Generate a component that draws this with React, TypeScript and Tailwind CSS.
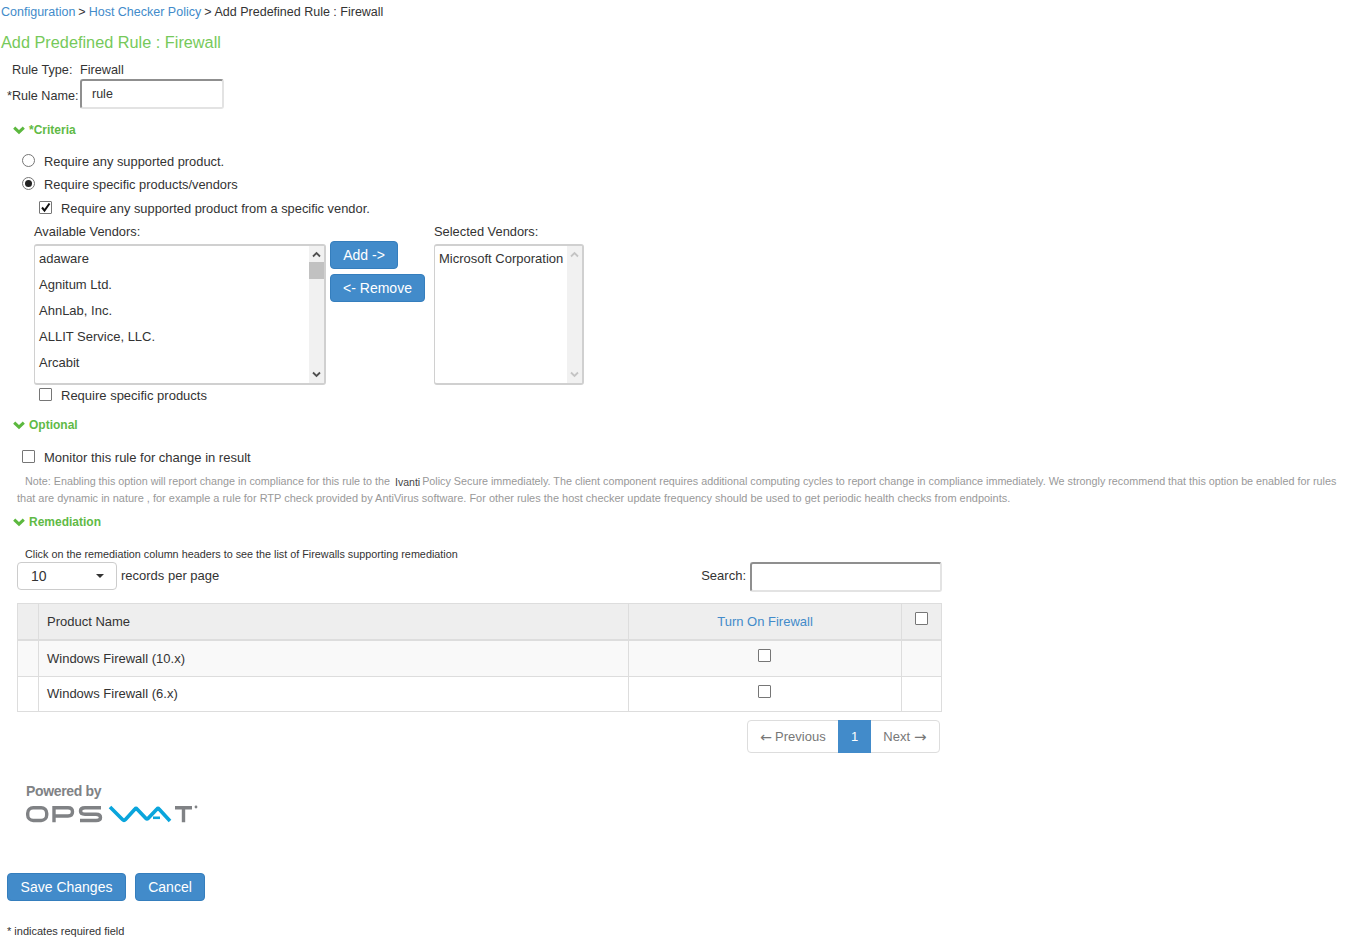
import { ReactNode } from 'react';

const vendors = ['adaware', 'Agnitum Ltd.', 'AhnLab, Inc.', 'ALLIT Service, LLC.', 'Arcabit'];

function Chevron() {
  return (
    <svg width="12" height="9" viewBox="0 0 12 9" className="shrink-0">
      <path d="M1.2 1.6 L6 6.2 L10.8 1.6" fill="none" stroke="#5cb83f" strokeWidth="3" />
    </svg>
  );
}

function SectionTitle({ children, className }: { children: ReactNode; className: string }) {
  return (
    <div className={`flex items-center gap-[4px] pl-[13px] h-[16px] text-[12px] font-bold text-[#5fba46] ${className}`}>
      <Chevron />
      <span>{children}</span>
    </div>
  );
}

function CheckBox({ checked }: { checked?: boolean }) {
  return (
    <span className="relative block w-[13px] h-[13px] border border-[#767676] bg-white rounded-[1px] shrink-0">
      {checked && (
        <svg width="11" height="11" viewBox="0 0 11 11" className="absolute left-0 top-0">
          <path d="M2 5.5 L4.5 8.5 L9.5 1.5" fill="none" stroke="#111" strokeWidth="2" />
        </svg>
      )}
    </span>
  );
}

function Radio({ checked }: { checked?: boolean }) {
  return (
    <span className="flex items-center justify-center w-[13px] h-[13px] border border-[#767676] bg-white rounded-full shrink-0">
      {checked && <span className="block w-[7px] h-[7px] rounded-full bg-[#222]" />}
    </span>
  );
}

function Arrow({ up, color }: { up?: boolean; color: string }) {
  return (
    <svg width="9" height="7" viewBox="0 0 9 7">
      <path d={up ? 'M1 5.5 L4.5 2 L8 5.5' : 'M1 1.5 L4.5 5 L8 1.5'} fill="none" stroke={color} strokeWidth="1.8" />
    </svg>
  );
}

function Btn({ children, className }: { children: ReactNode; className: string }) {
  return (
    <button className={`flex items-center justify-center h-[28px] rounded-[4px] bg-[#428bca] border border-[#357ebd] text-white text-[14px] ${className}`}>
      {children}
    </button>
  );
}

function OpswatLogo() {
  return (
    <svg width="174" height="20" viewBox="0 0 174 20" className="block">
      <g fill="none" stroke="#808285" strokeWidth="3.4">
        <rect x="2.7" y="3.7" width="19" height="12.8" rx="5.5" />
        <path d="M29 18.2 V3.7 H43 Q47.5 3.7 47.5 7.8 Q47.5 12 43 12 H29" />
        <path d="M76 3.7 H60 Q55.5 3.7 55.5 7 Q55.5 10.2 60 10.2 H71 Q75.5 10.2 75.5 13.4 Q75.5 16.5 71 16.5 H55" />
        <path d="M150 3.7 H167 M158.5 3.7 V18.2" />
      </g>
      <path d="M85 3 L97.5 15.5 Q99 17 100.5 15.5 L110 5 Q111 3.8 112 5 L121 14.5 Q122 15.6 123 14.5 L132 5 Q133 3.8 134 5 L145 17" fill="none" stroke="#0aa5dc" strokeWidth="3.6" />
      <rect x="128" y="12.5" width="7" height="2.6" fill="#0aa5dc" />
      <circle cx="171" cy="3" r="1.4" fill="#808285" />
    </svg>
  );
}

function Row({ name, odd }: { name: string; odd?: boolean }) {
  return (
    <div className={`flex border-b border-[#dddddd] text-[13px] text-[#333] ${odd ? 'h-[36px] bg-[#f9f9f9]' : 'h-[35px] bg-white'}`}>
      <div className="w-[21px] border-r border-[#dddddd]" />
      <div className="w-[590px] border-r border-[#dddddd] pl-[8px] flex items-center">{name}</div>
      <div className="w-[273px] border-r border-[#dddddd] flex items-center justify-center pb-[6px] pr-[1px]">
        <CheckBox />
      </div>
      <div className="flex-1" />
    </div>
  );
}

export default function App() {
  return (
    <div className="relative h-[937px] overflow-hidden bg-white text-[13px] leading-[20px] text-[#333] font-['Liberation_Sans',Arial,sans-serif]">
      {/* Breadcrumb */}
      <div className="h-[24px] pl-px flex items-center text-[12.5px] text-[#333]">
        <span className="text-[#428bca]">Configuration</span>
        <span className="mx-[3px]">&gt;</span>
        <span className="text-[#428bca]">Host Checker Policy</span>
        <span className="mx-[3px]">&gt;</span>
        <span>Add Predefined Rule : Firewall</span>
      </div>

      <h1 className="mt-[7px] ml-px h-[22px] leading-[22px] text-[16.3px] text-[#76c95a]">Add Predefined Rule : Firewall</h1>

      <div className="mt-[7px] ml-[12px] h-[20px] flex text-[12.7px] items-center">
        <span className="w-[68px]">Rule Type:</span>
        <span>Firewall</span>
      </div>

      <div className="-mt-px ml-[7px] flex items-center">
        <span className="w-[73px] pt-[4px] text-[12.6px]">*Rule Name:</span>
        <input
          readOnly
          value="rule"
          className="w-[144px] h-[30px] pl-[10px] pb-[1px] text-[12.5px] text-[#333] border-2 border-t-[#8f8f8f] border-l-[#8f8f8f] border-r-[#e3e3e3] border-b-[#e3e3e3] rounded-[3px] outline-none"
        />
      </div>

      <SectionTitle className="mt-[13px]">*Criteria</SectionTitle>

      <div className="mt-[14px] ml-[22px] h-[20px] flex items-center gap-[9px] text-[12.87px]">
        <span className="mb-[4px]"><Radio /></span>
        <span>Require any supported product.</span>
      </div>
      <div className="mt-[3px] ml-[22px] h-[20px] flex items-center gap-[9px] text-[12.87px]">
        <span className="mb-[4px]"><Radio checked /></span>
        <span>Require specific products/vendors</span>
      </div>
      <div className="mt-[4px] ml-[39px] h-[20px] flex items-center gap-[9px] text-[12.87px]">
        <span className="mb-[4px]"><CheckBox checked /></span>
        <span>Require any supported product from a specific vendor.</span>
      </div>

      {/* Vendor lists */}
      <div className="mt-[3px] ml-[34px] flex">
        <div className="w-[292px]">
          <div className="h-[20px] flex items-center text-[12.87px]">Available Vendors:</div>
          <div className="mt-[2px] h-[141px] flex border-2 border-[#d0d0d0] border-l rounded-[3px]">
            <div className="flex-1 pl-[4px]">
              {vendors.map((v) => (
                <div key={v} className="h-[26px] flex items-center">{v}</div>
              ))}
            </div>
            <div className="w-[15px] h-full bg-[#f1f1f1] flex flex-col items-center justify-between py-[5px] relative">
              <Arrow up color="#505050" />
              <div className="absolute left-0 top-[16px] w-full h-[17px] bg-[#c1c1c1]" />
              <Arrow color="#505050" />
            </div>
          </div>
        </div>

        <div className="ml-[4px] w-[104px] pt-[19px]">
          <Btn className="w-[68px]">Add -&gt;</Btn>
          <Btn className="w-[95px] mt-[5px]">&lt;- Remove</Btn>
        </div>

        <div className="w-[150px]">
          <div className="h-[20px] flex items-center text-[12.87px]">Selected Vendors:</div>
          <div className="mt-[2px] h-[141px] flex border-2 border-[#d0d0d0] border-l rounded-[3px]">
            <div className="flex-1 pl-[4px]">
              <div className="h-[26px] flex items-center whitespace-nowrap">Microsoft Corporation</div>
            </div>
            <div className="w-[15px] h-full bg-[#f1f1f1] flex flex-col items-center justify-between py-[5px]">
              <Arrow up color="#c4c4c4" />
              <Arrow color="#c4c4c4" />
            </div>
          </div>
        </div>
      </div>

      <div className="mt-[1px] ml-[39px] h-[20px] flex items-center gap-[9px]">
        <span className="mb-[4px]"><CheckBox /></span>
        <span>Require specific products</span>
      </div>

      <SectionTitle className="mt-[11px]">Optional</SectionTitle>

      <div className="mt-[15px] ml-[22px] h-[20px] flex items-center gap-[9px]">
        <span className="mb-[4px]"><CheckBox /></span>
        <span>Monitor this rule for change in result</span>
      </div>

      <p className="mt-[5px] ml-[17px] w-[1325px] h-[34px] text-[10.77px] leading-[17px] text-[#999999] indent-[8px]">
        Note: Enabling this option will report change in compliance for this rule to the <span className="text-[#444] text-[10.5px] leading-[0] mx-[2px] align-[-1px]">Ivanti</span>Policy Secure immediately. The client component requires additional computing cycles to report change in compliance immediately. We strongly recommend that this option be enabled for rules <span className="text-[10.97px]">that are dynamic in nature , for example a rule for RTP check provided by AntiVirus software. For other rules the host checker update frequency should be used to get periodic health checks from endpoints.</span>
      </p>

      <SectionTitle className="mt-[7px]">Remediation</SectionTitle>

      <div className="mt-[16px] ml-[25px] h-[16px] flex items-center text-[10.8px]">
        Click on the remediation column headers to see the list of Firewalls supporting remediation
      </div>

      {/* Table controls */}
      <div className="ml-[17px] w-[925px] flex items-center justify-between">
        <div className="flex items-center mb-[2px]">
          <div className="w-[100px] h-[28px] pl-[13px] pr-[12px] flex items-center justify-between border border-[#cccccc] rounded-[4px] text-[14px]">
            <span>10</span>
            <span className="block border-x-[4px] border-x-transparent border-t-[4px] border-t-[#333]" />
          </div>
          <span className="ml-[4px]">records per page</span>
        </div>
        <div className="flex items-center">
          <span className="mr-[4px] mb-[2px]">Search:</span>
          <div className="w-[192px] h-[30px] border-2 border-t-[#8f8f8f] border-l-[#8f8f8f] border-r-[#e3e3e3] border-b-[#e3e3e3] rounded-[3px]" />
        </div>
      </div>

      {/* Table */}
      <div className="mt-[11px] ml-[17px] w-[925px] border border-[#dddddd] border-b-0">
        <div className="flex h-[37px] bg-[#eeeeee] border-b-2 border-[#dddddd]">
          <div className="w-[21px] border-r border-[#dddddd]" />
          <div className="w-[590px] border-r border-[#dddddd] pl-[8px] flex items-center pt-[1px]">Product Name</div>
          <div className="w-[273px] border-r border-[#dddddd] flex items-center justify-center text-[#428bca] pt-[1px]">Turn On Firewall</div>
          <div className="flex-1 flex items-center justify-center pb-[6px]">
            <CheckBox />
          </div>
        </div>
        <Row name="Windows Firewall (10.x)" odd />
        <Row name="Windows Firewall (6.x)" />
      </div>

      {/* Pagination */}
      <div className="mt-[8px] ml-[747px] w-[193px] h-[33px] flex border border-[#dddddd] rounded-[4px] text-[#777777]">
        <div className="w-[90px] flex items-center justify-center gap-[3px]">
          <span className="font-['DejaVu_Sans'] text-[14px]">←</span>
          <span>Previous</span>
        </div>
        <div className="w-[33px] -my-px flex items-center justify-center bg-[#428bca] text-white">1</div>
        <div className="flex-1 flex items-center justify-center gap-[4px]">
          <span>Next</span>
          <span className="font-['DejaVu_Sans'] text-[15px]">→</span>
        </div>
      </div>

      {/* Logo */}
      <div className="mt-[28px] ml-[26px] h-[20px] leading-[20px] text-[14px] font-bold text-[#808285] tracking-[-0.35px]">Powered by</div>
      <div className="mt-[3px] ml-[25px]">
        <OpswatLogo />
      </div>

      <div className="mt-[49px] ml-[7px] flex gap-[9px]">
        <Btn className="w-[119px]">Save Changes</Btn>
        <Btn className="w-[70px]">Cancel</Btn>
      </div>

      <div className="mt-[23px] ml-[7px] h-[14px] leading-[14px] text-[11px] text-[#333]">* indicates required field</div>
    </div>
  );
}
